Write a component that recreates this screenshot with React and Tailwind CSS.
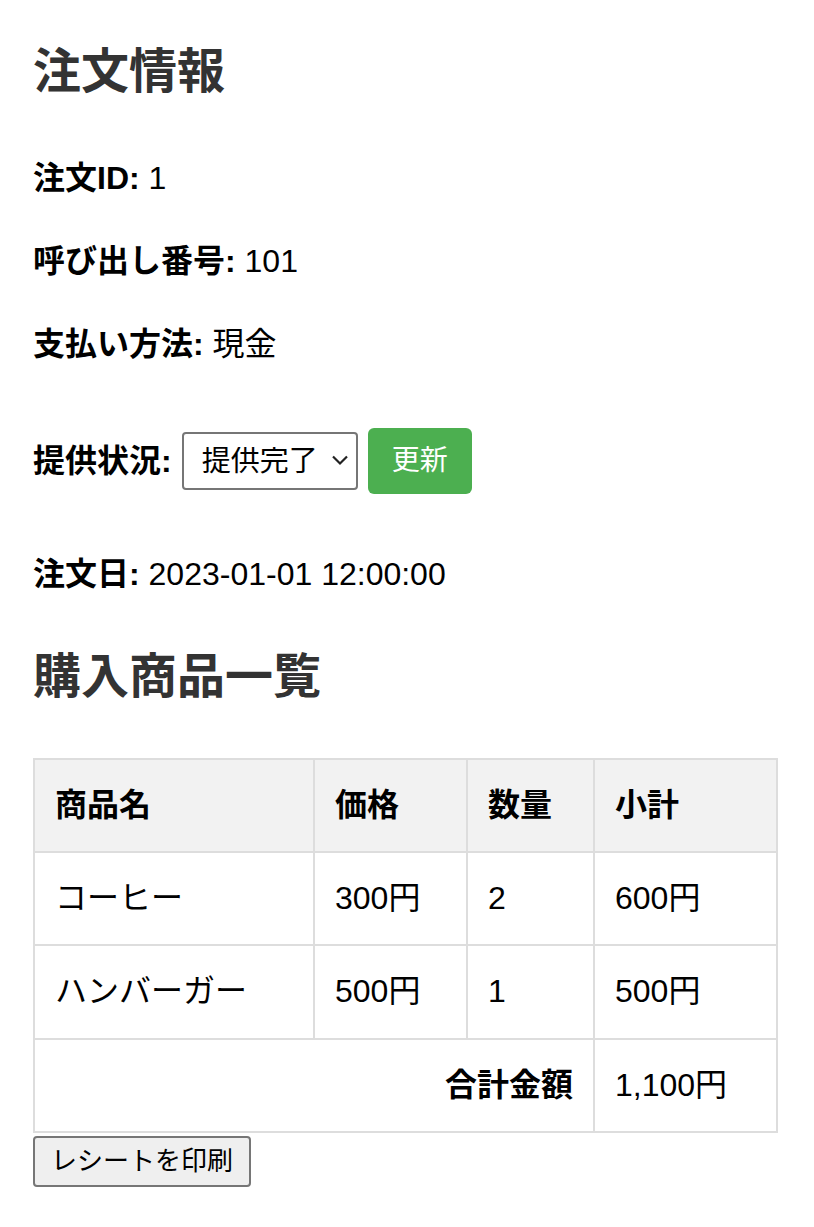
import { useState } from "react";

const items = [
  { name: "コーヒー", price: 300, qty: 2 },
  { name: "ハンバーガー", price: 500, qty: 1 },
];

const yen = (n) => `${n.toLocaleString("ja-JP")}円`;

export default function App() {
  const [status, setStatus] = useState("提供完了");
  const total = items.reduce((s, i) => s + i.price * i.qty, 0);

  const cell = "border-2 border-[#dddddd] px-[20px] py-[20px] text-left";

  return (
    <div
      className="min-h-screen bg-white pl-[33px] pr-[36px] text-[32px] leading-[1.6] text-black"
      style={{ fontFamily: '"Liberation Sans", "Noto Sans CJK JP", sans-serif' }}
    >
      <h1 className="pt-[43px] text-[48px] font-bold leading-[1.2] text-[#333333]">注文情報</h1>

      <p className="mt-[52px]">
        <span className="font-bold">注文ID:</span> 1
      </p>
      <p className="mt-[32px]">
        <span className="font-bold">呼び出し番号:</span> 101
      </p>
      <p className="mt-[32px]">
        <span className="font-bold">支払い方法:</span> 現金
      </p>

      <form className="mt-[58px] flex h-[66px] items-center gap-[10px]" onSubmit={(e) => e.preventDefault()}>
        <label className="font-bold">提供状況:</label>
        <div className="relative">
          <select
            value={status}
            onChange={(e) => setStatus(e.target.value)}
            className="h-[58px] w-[176px] appearance-none rounded-[4px] border-2 border-[#767676] bg-white pl-[18px] text-[29px] leading-none text-black"
          >
            <option>調理中</option>
            <option>提供完了</option>
          </select>
          <svg
            className="pointer-events-none absolute right-[9px] top-[22px]"
            width="18"
            height="12"
            viewBox="0 0 18 12"
            fill="none"
            stroke="#222"
            strokeWidth="2.2"
          >
            <path d="M2 2.5 L9 9.5 L16 2.5" />
          </svg>
        </div>
        <button
          type="submit"
          className="h-[66px] rounded-[6px] bg-[#4caf50] px-[24px] text-[28px] leading-none text-white"
        >
          更新
        </button>
      </form>

      <p className="mt-[55px]">
        <span className="font-bold">注文日:</span> 2023-01-01 12:00:00
      </p>

      <h2 className="mt-[48px] text-[48px] font-bold leading-[1.2] text-[#333333]">購入商品一覧</h2>

      <table className="mt-[52px] w-full border-collapse">
        <thead>
          <tr className="bg-[#f2f2f2]">
            <th className={`${cell} w-[280px]`}>商品名</th>
            <th className={`${cell} w-[153px]`}>価格</th>
            <th className={`${cell} w-[127px]`}>数量</th>
            <th className={cell}>小計</th>
          </tr>
        </thead>
        <tbody>
          {items.map((i) => (
            <tr key={i.name}>
              <td className={cell}>{i.name}</td>
              <td className={cell}>{yen(i.price)}</td>
              <td className={cell}>{i.qty}</td>
              <td className={cell}>{yen(i.price * i.qty)}</td>
            </tr>
          ))}
          <tr>
            <td colSpan={3} className={`${cell} text-right font-bold`}>
              合計金額
            </td>
            <td className={cell}>{yen(total)}</td>
          </tr>
        </tbody>
      </table>

      <button
        type="button"
        className="mt-[3px] h-[51px] rounded-[4px] border-2 border-[#767676] bg-[#efefef] px-[16px] text-[26px] leading-none text-black"
      >
        レシートを印刷
      </button>
    </div>
  );
}
